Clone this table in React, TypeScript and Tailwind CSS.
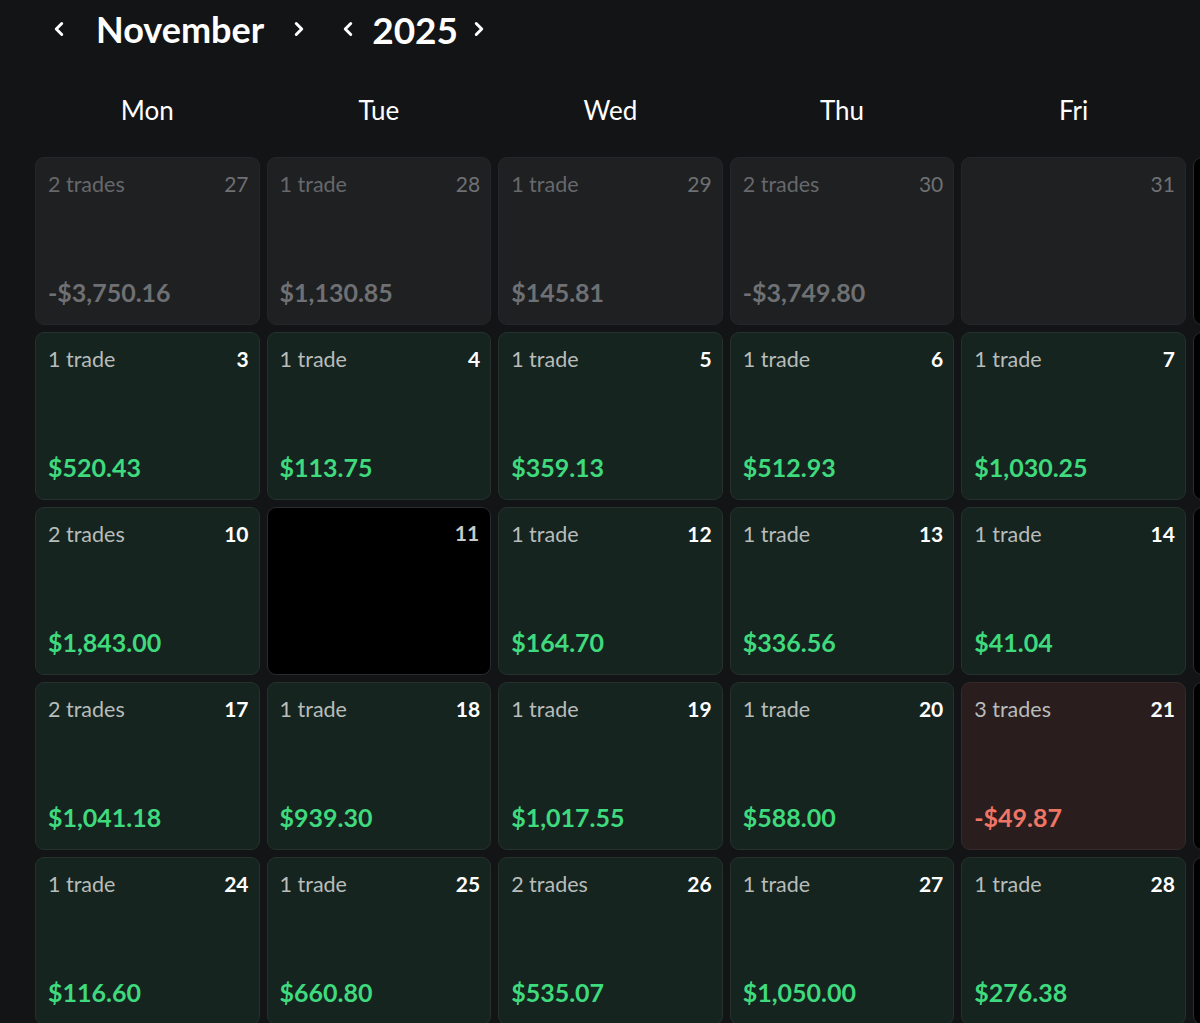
import { ChevronLeft, ChevronRight } from "lucide-react";

type Day = {
  day: number;
  trades?: number;
  pnl?: number;
  kind: "prev" | "cur" | "empty" | "weekend";
};

// Sat / Sun columns run past the window edge, so they carry no text
const weekdays = ["Mon", "Tue", "Wed", "Thu", "Fri", "", ""];

const days: Day[] = [
  { day: 27, trades: 2, pnl: -3750.16, kind: "prev" },
  { day: 28, trades: 1, pnl: 1130.85, kind: "prev" },
  { day: 29, trades: 1, pnl: 145.81, kind: "prev" },
  { day: 30, trades: 2, pnl: -3749.8, kind: "prev" },
  { day: 31, kind: "prev" },
  { day: 1, kind: "weekend" },
  { day: 2, kind: "weekend" },
  { day: 3, trades: 1, pnl: 520.43, kind: "cur" },
  { day: 4, trades: 1, pnl: 113.75, kind: "cur" },
  { day: 5, trades: 1, pnl: 359.13, kind: "cur" },
  { day: 6, trades: 1, pnl: 512.93, kind: "cur" },
  { day: 7, trades: 1, pnl: 1030.25, kind: "cur" },
  { day: 8, kind: "weekend" },
  { day: 9, kind: "weekend" },
  { day: 10, trades: 2, pnl: 1843.0, kind: "cur" },
  { day: 11, kind: "empty" },
  { day: 12, trades: 1, pnl: 164.7, kind: "cur" },
  { day: 13, trades: 1, pnl: 336.56, kind: "cur" },
  { day: 14, trades: 1, pnl: 41.04, kind: "cur" },
  { day: 15, kind: "weekend" },
  { day: 16, kind: "weekend" },
  { day: 17, trades: 2, pnl: 1041.18, kind: "cur" },
  { day: 18, trades: 1, pnl: 939.3, kind: "cur" },
  { day: 19, trades: 1, pnl: 1017.55, kind: "cur" },
  { day: 20, trades: 1, pnl: 588.0, kind: "cur" },
  { day: 21, trades: 3, pnl: -49.87, kind: "cur" },
  { day: 22, kind: "weekend" },
  { day: 23, kind: "weekend" },
  { day: 24, trades: 1, pnl: 116.6, kind: "cur" },
  { day: 25, trades: 1, pnl: 660.8, kind: "cur" },
  { day: 26, trades: 2, pnl: 535.07, kind: "cur" },
  { day: 27, trades: 1, pnl: 1050.0, kind: "cur" },
  { day: 28, trades: 1, pnl: 276.38, kind: "cur" },
  { day: 29, kind: "weekend" },
  { day: 30, kind: "weekend" },
];

const money = (n: number) =>
  (n < 0 ? "-$" : "$") +
  Math.abs(n).toLocaleString("en-US", { minimumFractionDigits: 2, maximumFractionDigits: 2 });

function DayCell({ d }: { d: Day }) {
  if (d.kind === "weekend") {
    return <div className="h-[168px] rounded-[9px] border border-[#2a2b2e] bg-black" />;
  }
  if (d.kind === "empty") {
    return (
      <div className="h-[168px] rounded-[9px] border border-[#2a2b2e] bg-black pr-[11px] pl-[12px] pt-[9px]">
        <div className="text-right text-[21px] font-bold text-[#c9c9c9]">{d.day}</div>
      </div>
    );
  }

  const prev = d.kind === "prev";
  const loss = (d.pnl ?? 0) < 0;

  let box = "bg-[#15241e] border-[#25312b]";
  if (prev) box = "bg-[#1f2022] border-[#252629]";
  else if (loss) box = "bg-[#2a1d1d] border-[#35292a]";

  let pnlColor = loss ? "text-[#ef7566]" : "text-[#3fd97e]";
  if (prev) pnlColor = "text-[#6e7073]";

  return (
    <div
      className={`flex h-[168px] flex-col justify-between rounded-[9px] border pl-[12px] pr-[10px] pt-[10px] pb-[13px] ${box}`}
    >
      <div className="flex items-center justify-between">
        <span className={`text-[21.5px] ${prev ? "text-[#66686b]" : "text-[#b8bcba]"}`}>
          {d.trades ? `${d.trades} ${d.trades === 1 ? "trade" : "trades"}` : ""}
        </span>
        <span className={`text-[21px] ${prev ? "text-[#6e7073]" : "font-bold text-white"}`}>
          {d.day}
        </span>
      </div>
      <div className={`text-[25px] font-bold ${pnlColor}`}>
        {d.pnl !== undefined ? money(d.pnl) : ""}
      </div>
    </div>
  );
}

export default function App() {
  return (
    <div
      className="min-h-screen w-full overflow-hidden bg-[#131416] text-white"
      style={{ fontFamily: "Lato, 'Noto Sans', sans-serif" }}
    >
      <div className="flex h-[58px] items-center pl-[48px]">
        <ChevronLeft size={22} strokeWidth={3.2} className="text-white" />
        <span className="ml-[26px] text-[36px] font-bold leading-none">November</span>
        <ChevronRight size={22} strokeWidth={3.2} className="ml-[24px] text-white" />
        <ChevronLeft size={22} strokeWidth={3.2} className="ml-[27px] text-white" />
        <span className="ml-[13px] text-[37px] font-bold leading-none">2025</span>
        <ChevronRight size={22} strokeWidth={3.2} className="ml-[10px] text-white" />
      </div>

      <div className="ml-[35px] w-[1614px]">
        <div className="mt-[32px] grid grid-cols-7 gap-x-[7px]">
          {weekdays.map((w, i) => (
            <div key={i} className="h-[40px] text-center text-[26px] leading-[40px]">
              {w}
            </div>
          ))}
        </div>
        <div className="mt-[27px] grid grid-cols-7 gap-[7px]">
          {days.map((d, i) => (
            <DayCell key={i} d={d} />
          ))}
        </div>
      </div>
    </div>
  );
}
